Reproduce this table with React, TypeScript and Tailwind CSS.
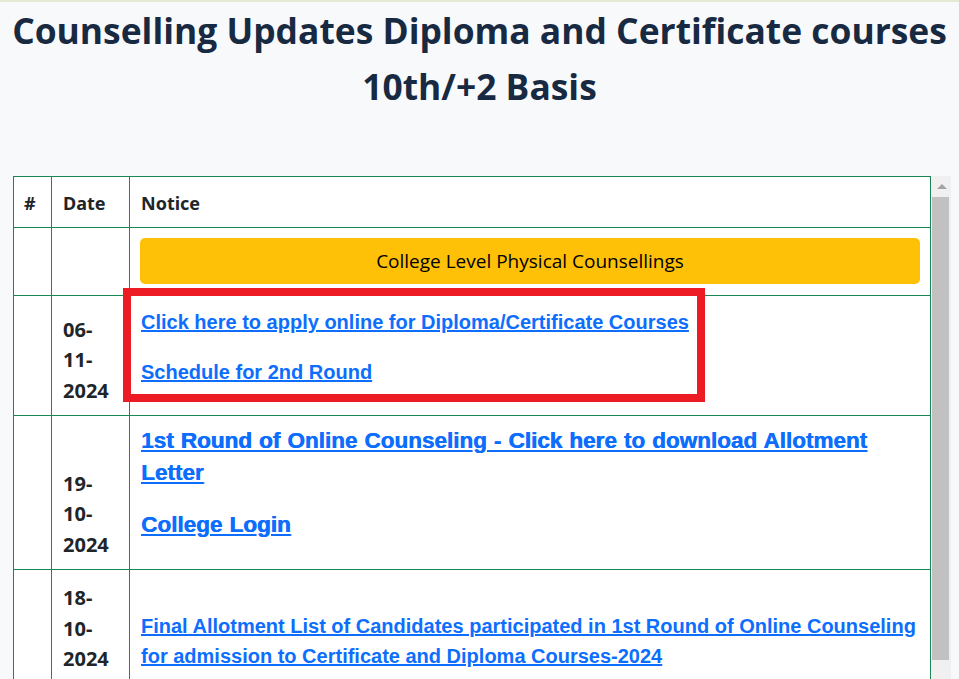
const linkCls = "font-['Liberation_Sans',Arial,sans-serif] font-bold text-[#0d6efd] underline";

const Link = ({ children, className = "" }: { children: React.ReactNode; className?: string }) => (
    <a href="#" className={`${linkCls} ${className}`}>{children}</a>
)

const DateCell = ({ d, m, y, top }: { d: string; m: string; y: string; top?: boolean }) => (
    <td className={`border border-[#198754] pl-[11px] pr-2 ${top ? "align-top pt-[13px]" : "align-bottom pb-[9px]"} font-['Noto_Sans',sans-serif] text-[20px] leading-[30.5px] font-bold text-[#212529]`}>
        <div>{d}-</div>
        <div>{m}-</div>
        <div>{y}</div>
    </td>
)

export default function App() {
    return (
        <div className="w-[959px] h-[679px] overflow-hidden bg-[#f8f9fb]">
            <div className="h-[2px] bg-[#e3ead3]" />
            <h1 className="text-center font-['Open_Sans',sans-serif] font-bold text-[35.4px] leading-[56px] text-[#182a42] whitespace-nowrap">
                Counselling Updates Diploma and Certificate courses
                <br />
                10th/+2 Basis
            </h1>

            <div className="flex mt-[62px] pl-[13px]">
                <div className="relative w-[918px] bg-white">
                    <table className="w-full table-fixed border-collapse">
                        <colgroup>
                            <col className="w-[38px]" />
                            <col className="w-[78px]" />
                            <col />
                        </colgroup>
                        <thead>
                            <tr className="font-['Noto_Sans',sans-serif] text-[18px] leading-[26px] font-bold text-[#212529] text-left">
                                <th className="border border-[#198754] pl-[10px] pt-[13px] pb-[11px]">#</th>
                                <th className="border border-[#198754] pl-[11px] pt-[13px] pb-[11px]">Date</th>
                                <th className="border border-[#198754] pl-[11px] pt-[13px] pb-[11px]">Notice</th>
                            </tr>
                        </thead>
                        <tbody>
                            <tr>
                                <td className="border border-[#198754]" />
                                <td className="border border-[#198754]" />
                                <td className="border border-[#198754] px-[10px] pt-[10px] pb-[11px]">
                                    <div className="h-[46px] rounded-[5px] bg-[#ffc107] flex items-center justify-center font-['Open_Sans',sans-serif] text-[19px] text-black">
                                        College Level Physical Counsellings
                                    </div>
                                </td>
                            </tr>
                            <tr>
                                <td className="border border-[#198754]" />
                                <DateCell d="06" m="11" y="2024" />
                                <td className="border border-[#198754] align-top px-[11px] pt-[11px] pb-[8px] text-[20px] leading-[30px]">
                                    <p className="mb-5"><Link>Click here to apply online for Diploma/Certificate Courses</Link></p>
                                    <p className="mb-5"><Link>Schedule for 2nd Round</Link></p>
                                </td>
                            </tr>
                            <tr>
                                <td className="border border-[#198754]" />
                                <DateCell d="19" m="10" y="2024" />
                                <td className="border border-[#198754] align-top px-[11px] pt-[8px] pb-[9px] text-[22.5px] leading-[31px] [word-spacing:0.8px]">
                                    <p className="mb-5"><Link className="[text-shadow:0.6px_0_0_#0d6efd]">1st Round of Online Counseling - Click here to download Allotment Letter</Link></p>
                                    <p className="mb-5"><Link className="[text-shadow:0.6px_0_0_#0d6efd]">College Login</Link></p>
                                </td>
                            </tr>
                            <tr>
                                <td className="border border-[#198754]" />
                                <DateCell d="18" m="10" y="2024" top />
                                <td className="border border-[#198754] align-top px-[11px] pt-[41px] pb-[20px] text-[20px] leading-[30px]">
                                    <p><Link>Final Allotment List of Candidates participated in 1st Round of Online Counseling for admission to Certificate and Diploma Courses-2024</Link></p>
                                </td>
                            </tr>
                        </tbody>
                    </table>
                    {/* red highlight box drawn over the table */}
                    <div className="absolute left-[110px] top-[112px] w-[582px] h-[114px] border-[8px] border-[#ed1c24]" />
                </div>

                {/* scrollbar of the inner frame */}
                <div className="ml-[1px] w-[19px] h-[503px] bg-[#f0f0f0] flex flex-col">
                    <div className="h-[21px] flex items-center justify-center">
                        <div className="w-0 h-0 border-l-[5px] border-r-[5px] border-b-[5px] border-l-transparent border-r-transparent border-b-[#a3a3a3]" />
                    </div>
                    <div className="w-[17px] h-[463px] bg-[#c1c1c1]" />
                </div>
            </div>
        </div>
    )
}
